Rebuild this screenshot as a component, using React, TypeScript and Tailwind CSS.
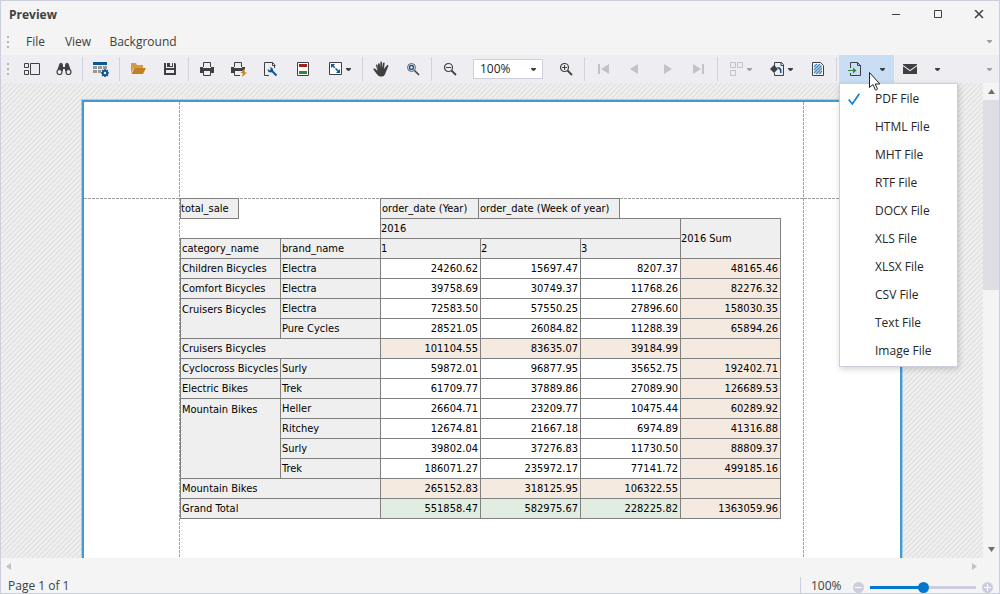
import { useState } from 'react';
import type { ReactNode } from 'react';
import clsx from 'clsx';

const DARK = '#404040';
const BLUE = '#0b5599';
const ORANGE = '#c77f1e';
const MUTED = '#c3c3c6';

type IconProps = { children: ReactNode };

function Icon({ children }: IconProps) {
  return (
    <svg width="16" height="16" viewBox="0 0 16 16" fill="none" aria-hidden className="shrink-0">
      {children}
    </svg>
  );
}

function Caret({ color = DARK }: { color?: string }) {
  return (
    <svg width="5" height="3" viewBox="0 0 5 3" aria-hidden className="shrink-0">
      <path d="M0 0h5v1L3 3H2L0 1z" fill={color} />
    </svg>
  );
}

const ThumbnailsIcon = () => (
  <Icon>
    <path d="M.5 2.500h4v4h-4zM.5 9.500h4v4h-4zM6.500 2.500h9v11h-9z" stroke={DARK} />
  </Icon>
);

const FindIcon = () => (
  <Icon>
    <path d="M3 4 4 2h2l1 2v2h2V4l1-2h2l1 2 2 6H9V8H7v2H1z" fill={DARK} />
    <circle cx="3.500" cy="11" r="2.500" stroke={DARK} strokeWidth="1.200" fill="#efeef3" />
    <circle cx="12.500" cy="11" r="2.500" stroke={DARK} strokeWidth="1.200" fill="#efeef3" />
  </Icon>
);

const ParametersIcon = () => (
  <Icon>
    <path d="M0 1h14v3H0z" fill={BLUE} />
    <path d="M0 5h4v3H0zM5 5h4v3H5zM10 5h4v3h-4zM0 9h4v3H0zM5 9h3v3H5z" fill="#979799" />
    <path d="M12 8v8M8 12h8M9.200 9.200l5.600 5.600M14.800 9.200l-5.600 5.600" stroke={BLUE} strokeWidth="1.700" />
    <circle cx="12" cy="12" r="2.200" fill="#efeef3" stroke={BLUE} strokeWidth="1.800" />
  </Icon>
);

const OpenIcon = () => (
  <Icon>
    <path d="M1 12V2h5l1 2h6v3H4z" fill="#d39b52" />
    <path d="M4.500 7H16l-3 6H1.500z" fill={ORANGE} />
  </Icon>
);

const SaveIcon = () => (
  <Icon>
    <path d="M2 2h2v5h8V2h1l1 1v11H2z" fill={DARK} />
    <path d="M5 2h6v4H5z" fill={DARK} />
    <path d="M8 2h2v3H8zM4 9h8v3H4z" fill="#efeef3" />
  </Icon>
);

const PrintIcon = () => (
  <Icon>
    <path d="M4.500 6V1.500h7V6" stroke={DARK} />
    <path d="M1 6h3v1h8V6h3v6h-3v-2H4v2H1z" fill={DARK} />
    <path d="M4.500 10v4.500h7V10" stroke={DARK} />
  </Icon>
);

const QuickPrintIcon = () => (
  <Icon>
    <path d="M3.500 6V1.500h7V6" stroke={DARK} />
    <path d="M0 6h3v1h8V6h3v2l-3 2H3v2H0z" fill={DARK} />
    <path d="M3.500 10v4.500H9" stroke={DARK} />
    <path d="M14 7.500 9.500 12H12l-1 4 5-4.500h-2.500z" fill={ORANGE} />
  </Icon>
);

const PageSetupIcon = () => (
  <Icon>
    <path d="M6 14.500H1.500v-13h8l2 2V7M9.500 1.500v3h3" stroke={DARK} />
    <path d="m8 9 5.500 5.500" stroke={BLUE} strokeWidth="2" />
    <path d="M5 8 6.500 9.500 8 8 6.500 6.500C9 6 10.500 7.500 10 9.500c-.6 2-2.800 2.500-4.500 1.200C4.700 10 4.600 9 5 8z" fill={BLUE} />
  </Icon>
);

const HeaderFooterIcon = () => (
  <Icon>
    <path d="M2.500 1.500h11v13h-11z" stroke={DARK} fill="#fff" />
    <path d="M4 3h8v3H4z" fill="#a5200f" />
    <path d="M4 10h8v3H4z" fill="#2f8b35" />
  </Icon>
);

const ScaleIcon = () => (
  <Icon>
    <path d="M1.500 1.500h12v12h-12z" stroke={DARK} fill="#fff" />
    <path d="m4 4 7 7" stroke={BLUE} strokeWidth="1.500" strokeDasharray="4 1" />
    <path d="M3 3h4L3 7zM12 8v4H8z" fill={BLUE} />
  </Icon>
);

const HandIcon = () => (
  <Icon>
    <path
      d="M5 9.500V3.200C5 2 6.700 2 6.800 3.200L7.300 7V1.500C7.400.2 9 .2 9 1.500V7l.9-4.800c.2-1.200 1.800-1 1.700.2L11 8l2.800-3.500c.7-.9 2-.2 1.500.8L12.500 12c-.7 2-1.500 3.500-3.500 3.500H7.500c-1.500 0-2.400-.8-3.300-2L.5 8.800c-.5-1 .7-1.800 1.500-1.200L4.500 10 3 4.500c-.3-1.100 1.200-1.600 1.600-.5z"
      fill={DARK}
    />
  </Icon>
);

const MagnifierIcon = () => (
  <Icon>
    <circle cx="6.500" cy="6.500" r="4" stroke="#606060" />
    <circle cx="6.500" cy="6.500" r="2" stroke={BLUE} strokeWidth="1.400" />
    <path d="m9.500 9.500 4.500 4.500" stroke={DARK} strokeWidth="1.600" />
  </Icon>
);

const ZoomGlassIcon = ({ plus = false }: { plus?: boolean }) => (
  <Icon>
    <circle cx="6.500" cy="6.500" r="4" stroke={DARK} strokeWidth="1.200" />
    <path d={plus ? 'M4 6.500h5M6.500 4v5' : 'M4 6.500h5'} stroke={DARK} />
    <path d="m9.500 9.500 4.500 4.500" stroke={DARK} strokeWidth="1.800" />
  </Icon>
);

const FirstIcon = () => (
  <Icon>
    <path d="M3 3h2v10H3zM14 3v10L6 8z" fill={MUTED} />
  </Icon>
);

const PrevIcon = () => (
  <Icon>
    <path d="M11 3v10L3 8z" fill={MUTED} />
  </Icon>
);

const NextIcon = () => (
  <Icon>
    <path d="M5 3v10l8-5z" fill={MUTED} />
  </Icon>
);

const LastIcon = () => (
  <Icon>
    <path d="M2 3v10l8-5zM11 3h2v10h-2z" fill={MUTED} />
  </Icon>
);

const MultiPageIcon = () => (
  <Icon>
    <path d="M1.500 1.500h5v5h-5zM8.500 1.500h5v5h-5zM1.500 9.500h5v5h-5z" stroke={MUTED} />
  </Icon>
);

const PageColorIcon = () => (
  <Icon>
    <path d="M4.500 5V1.500h7l2 2v11h-9V12" stroke={DARK} />
    <path d="M11 1.500v3h3" stroke={DARK} />
    <path d="m0 8 4-4 4 4-4 4z" fill={DARK} />
    <path d="M7 6c2.500-.5 4.500 1 4.500 3.500V12H10V9.500z" fill={BLUE} />
  </Icon>
);

const WatermarkIcon = () => (
  <Icon>
    <path d="M2.500 1.500h8l3 3v10h-11z" stroke={DARK} fill="#fff" />
    <path d="M4 3h6l2 2v8H4z" fill="#d3e2f0" />
    <path d="m4 6 3-3M4 9l6-6M4 12l7.500-7.500M6 13l6-6M9 13l3-3" stroke="#4f88bd" strokeWidth="1.200" />
  </Icon>
);

const ExportIcon = () => (
  <Icon>
    <path d="M3.500 7V1.500h7l3 3v10h-10V12M10.500 1.500v3h3" stroke={DARK} />
    <path d="M1 9h5V6.500L9.500 9.500 6 12.500V10H1z" fill="#2f8b35" />
  </Icon>
);

const MailIcon = () => (
  <Icon>
    <path d="M1 3h14v1L8 9 1 4z" fill={DARK} />
    <path d="m1 5.300 7 5 7-5V13H1z" fill={DARK} />
  </Icon>
);

type ToolProps = { label: string; children: ReactNode; disabled?: boolean };

function Tool({ label, children, disabled }: ToolProps) {
  return (
    <button
      type="button"
      aria-label={label}
      disabled={disabled}
      className="flex h-7 w-8 shrink-0 items-center justify-center"
    >
      {children}
    </button>
  );
}

function DropTool({ label, children, disabled }: ToolProps) {
  return (
    <button
      type="button"
      aria-label={label}
      disabled={disabled}
      className="flex h-7 w-[41px] shrink-0 items-center justify-center gap-0.5"
    >
      {children}
      <Caret color={disabled ? '#a0a0a3' : DARK} />
    </button>
  );
}

const Separator = () => (
  <div className="flex h-6 w-[5px] shrink-0 justify-center">
    <div className="w-px bg-[#d2d2da]" />
  </div>
);

const Grip = () => (
  <div className="flex w-[15px] shrink-0 flex-col items-center gap-[3px] pr-px">
    <span className="h-[2px] w-[2px] bg-[#b4b4b8]" />
    <span className="h-[2px] w-[2px] bg-[#b4b4b8]" />
    <span className="h-[2px] w-[2px] bg-[#b4b4b8]" />
  </div>
);

function TitleBar() {
  return (
    <header className="flex h-[27px] shrink-0 items-center justify-between pl-2">
      <h1 className="font-bold text-[#404040]">Preview</h1>
      <div className="flex">
        <button type="button" aria-label="Minimize" className="flex h-7 w-[42px] items-center justify-center">
          <svg width="10" height="10" viewBox="0 0 10 10" aria-hidden>
            <path d="M1 4h8v1H1z" fill={DARK} />
          </svg>
        </button>
        <button type="button" aria-label="Maximize" className="flex h-7 w-[42px] items-center justify-center">
          <svg width="10" height="10" viewBox="0 0 10 10" fill="none" aria-hidden>
            <path d="M1.500.500h7v7h-7z" stroke={DARK} />
          </svg>
        </button>
        <button type="button" aria-label="Close" className="flex h-7 w-[40px] items-center justify-center">
          <svg width="10" height="10" viewBox="0 0 10 10" fill="none" aria-hidden>
            <path d="m1 0 8 8M9 0 1 8" stroke={DARK} strokeWidth="1.500" />
          </svg>
        </button>
      </div>
    </header>
  );
}

function MenuBar() {
  return (
    <nav className="flex h-[27px] shrink-0 items-center text-[#404040]">
      <Grip />
      <button type="button" className="w-[39px] text-center">File</button>
      <button type="button" className="w-[46px] text-center">View</button>
      <button type="button" className="w-[84px] text-center">Background</button>
      <div className="ml-auto pr-[7px]">
        <Caret color="#a0a0a3" />
      </div>
    </nav>
  );
}

const exportFormats = [
  'PDF File',
  'HTML File',
  'MHT File',
  'RTF File',
  'DOCX File',
  'XLS File',
  'XLSX File',
  'CSV File',
  'Text File',
  'Image File',
];

function ExportMenu() {
  const [selected, setSelected] = useState('PDF File');

  return (
    <div
      role="menu"
      className="absolute top-full left-0 z-20 flex w-[119px] flex-col border border-[#cccede] bg-white pt-px pb-px shadow-[1px_2px_6px_rgba(0,0,0,0.18)]"
    >
      {exportFormats.map((format) => (
        <button
          key={format}
          type="button"
          role="menuitemradio"
          aria-checked={format === selected}
          onClick={() => setSelected(format)}
          className="flex h-7 items-center text-left text-[#262626]"
        >
          <span className="flex w-[35px] pl-2">
            {format === selected && (
              <svg width="12" height="12" viewBox="0 0 12 12" fill="none" aria-hidden>
                <path d="M.7 6.500 4.300 11 11.300.7" stroke="#0c7ccf" strokeWidth="1.600" />
              </svg>
            )}
          </span>
          {format}
        </button>
      ))}
    </div>
  );
}

function Toolbar() {
  return (
    <div className="flex h-7 shrink-0 items-center bg-[#eeedf2]">
      <Grip />
      <Tool label="Thumbnails"><ThumbnailsIcon /></Tool>
      <Tool label="Search"><FindIcon /></Tool>
      <Separator />
      <Tool label="Parameters"><ParametersIcon /></Tool>
      <Separator />
      <Tool label="Open"><OpenIcon /></Tool>
      <Tool label="Save"><SaveIcon /></Tool>
      <Separator />
      <Tool label="Print"><PrintIcon /></Tool>
      <Tool label="Quick print"><QuickPrintIcon /></Tool>
      <Tool label="Page setup"><PageSetupIcon /></Tool>
      <Tool label="Header and footer"><HeaderFooterIcon /></Tool>
      <DropTool label="Scale"><ScaleIcon /></DropTool>
      <Separator />
      <Tool label="Hand tool"><HandIcon /></Tool>
      <Tool label="Magnifier"><MagnifierIcon /></Tool>
      <Separator />
      <Tool label="Zoom out"><ZoomGlassIcon /></Tool>
      <div className="relative mx-[7px] flex h-5 w-[70px] shrink-0 items-center">
        <select
          aria-label="Zoom"
          defaultValue="100%"
          className="h-5 w-full appearance-none border border-[#cccede] bg-white pl-[6px] text-[#262626]"
        >
          <option>50%</option>
          <option>100%</option>
          <option>200%</option>
        </select>
        <span className="pointer-events-none absolute right-[7px] flex">
          <Caret />
        </span>
      </div>
      <Tool label="Zoom in"><ZoomGlassIcon plus /></Tool>
      <Separator />
      <Tool label="First page" disabled><FirstIcon /></Tool>
      <Tool label="Previous page" disabled><PrevIcon /></Tool>
      <Tool label="Next page" disabled><NextIcon /></Tool>
      <Tool label="Last page" disabled><LastIcon /></Tool>
      <Separator />
      <DropTool label="Multiple pages" disabled><MultiPageIcon /></DropTool>
      <DropTool label="Page color"><PageColorIcon /></DropTool>
      <Tool label="Watermark"><WatermarkIcon /></Tool>
      <Separator />
      <div className="relative flex h-7 shrink-0 bg-[#c9def5]">
        <Tool label="Export"><ExportIcon /></Tool>
        <button type="button" aria-label="Export formats" className="flex w-[23px] items-center justify-center">
          <Caret />
        </button>
        <ExportMenu />
        <svg
          width="13"
          height="20"
          viewBox="0 0 13 20"
          aria-hidden
          className="pointer-events-none absolute top-[17px] left-[30px] z-30"
        >
          <path
            d="M.5.500v15l3.500-3 2.300 5.300c.3.700 2.400-.2 2.100-.9L6.200 12h4.600z"
            fill="#fff"
            stroke="#222"
          />
        </svg>
      </div>
      <Tool label="Send by e-mail"><MailIcon /></Tool>
      <button type="button" aria-label="E-mail formats" className="flex h-7 w-[23px] shrink-0 items-center justify-center">
        <Caret />
      </button>
      <div className="ml-auto pr-[7px]">
        <Caret color="#a0a0a3" />
      </div>
    </div>
  );
}

type Row = {
  category?: string;
  span?: number;
  brand?: string;
  values: string[];
  kind?: 'total' | 'grand';
};

const rows: Row[] = [
  { category: 'Children Bicycles', brand: 'Electra', values: ['24260.62', '15697.47', '8207.37', '48165.46'] },
  { category: 'Comfort Bicycles', brand: 'Electra', values: ['39758.69', '30749.37', '11768.26', '82276.32'] },
  { category: 'Cruisers Bicycles', span: 2, brand: 'Electra', values: ['72583.50', '57550.25', '27896.60', '158030.35'] },
  { brand: 'Pure Cycles', values: ['28521.05', '26084.82', '11288.39', '65894.26'] },
  { category: 'Cruisers Bicycles', values: ['101104.55', '83635.07', '39184.99', ''], kind: 'total' },
  { category: 'Cyclocross Bicycles', brand: 'Surly', values: ['59872.01', '96877.95', '35652.75', '192402.71'] },
  { category: 'Electric Bikes', brand: 'Trek', values: ['61709.77', '37889.86', '27089.90', '126689.53'] },
  { category: 'Mountain Bikes', span: 4, brand: 'Heller', values: ['26604.71', '23209.77', '10475.44', '60289.92'] },
  { brand: 'Ritchey', values: ['12674.81', '21667.18', '6974.89', '41316.88'] },
  { brand: 'Surly', values: ['39802.04', '37276.83', '11730.50', '88809.37'] },
  { brand: 'Trek', values: ['186071.27', '235972.17', '77141.72', '499185.16'] },
  { category: 'Mountain Bikes', values: ['265152.83', '318125.95', '106322.55', ''], kind: 'total' },
  { category: 'Grand Total', values: ['551858.47', '582975.67', '228225.82', '1363059.96'], kind: 'grand' },
];

function valueColor(row: Row, index: number) {
  if (index === 3 || row.kind === 'total') return 'bg-[#f5eadf]';
  if (row.kind === 'grand') return 'bg-[#e2ede1]';
  return 'bg-white';
}

const head = 'border border-[#808080] bg-[#efefef] p-0 text-left font-normal';

function PivotGrid() {
  return (
    <div className="w-[601px] font-['DejaVu_Sans_Condensed','DejaVu_Sans',sans-serif] text-[11px] leading-[14px] text-black">
      <div className="-mb-px flex h-[21px]">
        <div className="flex w-[59px] items-center border border-[#808080] bg-[#efefef]">total_sale</div>
        <div className="ml-[141px] flex w-[99px] items-center border border-[#808080] bg-[#efefef] pl-px">
          order_date (Year)
        </div>
        <div className="-ml-px flex w-[142px] items-center border border-[#808080] bg-[#efefef] pl-px">
          order_date (Week of year)
        </div>
      </div>
      <table className="w-full table-fixed border-collapse">
        <thead>
          <tr className="h-5">
            <td colSpan={2} className="p-0" />
            <th colSpan={3} className={head}>2016</th>
            <th rowSpan={2} className={head}>2016 Sum</th>
          </tr>
          <tr className="h-5">
            <th className={clsx(head, 'pl-px')}>category_name</th>
            <th className={clsx(head, 'pl-px')}>brand_name</th>
            <th className={head}>1</th>
            <th className={head}>2</th>
            <th className={head}>3</th>
          </tr>
        </thead>
        <tbody>
          {rows.map((row, i) => (
            <tr key={i} className="h-5">
              {row.category && (
                <th
                  rowSpan={row.span}
                  colSpan={row.brand ? 1 : 2}
                  className={clsx(head, 'pl-px whitespace-nowrap', row.span && 'pt-1 align-top')}
                >
                  {row.category}
                </th>
              )}
              {row.brand && <th className={clsx(head, 'pl-px')}>{row.brand}</th>}
              {row.values.map((value, j) => (
                <td
                  key={j}
                  className={clsx('border border-[#808080] p-0 pr-0.5 text-right', valueColor(row, j))}
                >
                  {value}
                </td>
              ))}
            </tr>
          ))}
        </tbody>
      </table>
    </div>
  );
}

const dashV =
  'absolute inset-y-0 w-px bg-[repeating-linear-gradient(to_bottom,#a0a0a0_0_3px,transparent_3px_4px)]';

function Paper() {
  return (
    <article className="relative h-[1060px] w-[822px] shrink-0 border border-[#a3cfea] bg-white">
      <div className="relative h-full border-2 border-[#4499d3] pt-24 pl-24">
        <div className={clsx(dashV, 'left-[95px]')} />
        <div className={clsx(dashV, 'right-24')} />
        <div className="absolute inset-x-0 top-24 h-px bg-[repeating-linear-gradient(to_right,#a0a0a0_0_3px,transparent_3px_4px)]" />
        <div className="relative">
          <PivotGrid />
        </div>
      </div>
    </article>
  );
}

function VerticalScrollBar() {
  return (
    <div className="flex w-4 shrink-0 flex-col bg-[#f4f4f4]">
      <button type="button" aria-label="Scroll up" className="flex h-[17px] items-center justify-center">
        <svg width="7" height="5" viewBox="0 0 7 5" aria-hidden>
          <path d="M3.500 0 7 5H0z" fill="#707070" />
        </svg>
      </button>
      <div className="flex-1">
        <div className="h-[43%] bg-[#dedde3]" />
      </div>
      <button type="button" aria-label="Scroll down" className="flex h-[17px] items-center justify-center">
        <svg width="7" height="5" viewBox="0 0 7 5" aria-hidden>
          <path d="M0 0h7L3.500 5z" fill="#707070" />
        </svg>
      </button>
    </div>
  );
}

function HorizontalScrollBar() {
  return (
    <div className="flex h-[17px] shrink-0 items-center justify-between pr-[22px] pl-[5px]">
      <button type="button" aria-label="Scroll left" disabled>
        <svg width="5" height="7" viewBox="0 0 5 7" aria-hidden>
          <path d="M5 0v7L0 3.500z" fill="#c2c2c5" />
        </svg>
      </button>
      <button type="button" aria-label="Scroll right" disabled>
        <svg width="5" height="7" viewBox="0 0 5 7" aria-hidden>
          <path d="M0 0v7l5-3.500z" fill="#c2c2c5" />
        </svg>
      </button>
    </div>
  );
}

function StatusBar() {
  return (
    <footer className="flex h-[18px] shrink-0 items-end leading-[14px] text-[#404040]">
      <span className="flex-1 pl-[7px]">Page 1 of 1</span>
      <div className="flex h-4 items-end border-l border-[#cccede] pr-[6px] pl-[10px]">
        <label htmlFor="zoom-track" className="w-[42px]">100%</label>
        <div className="flex h-3 items-center gap-1.5">
          <button type="button" aria-label="Decrease zoom">
            <svg width="11" height="11" viewBox="0 0 11 11" aria-hidden>
              <circle cx="5.500" cy="5.500" r="5.500" fill="#cccddd" />
              <path d="M2 5h7v1H2z" fill="#fff" />
            </svg>
          </button>
          <input
            id="zoom-track"
            type="range"
            defaultValue={50}
            className="h-[11px] w-[106px] appearance-none bg-[linear-gradient(to_right,#0078d0_50%,#cccddd_50%)] bg-[length:100%_3px] bg-center bg-no-repeat [&::-webkit-slider-thumb]:h-[11px] [&::-webkit-slider-thumb]:w-[11px] [&::-webkit-slider-thumb]:appearance-none [&::-webkit-slider-thumb]:rounded-full [&::-webkit-slider-thumb]:bg-[#0078d0]"
          />
          <button type="button" aria-label="Increase zoom">
            <svg width="11" height="11" viewBox="0 0 11 11" aria-hidden>
              <circle cx="5.500" cy="5.500" r="5.500" fill="#cccddd" />
              <path d="M2 5h7v1H2zM5 2h1v7H5z" fill="#fff" />
            </svg>
          </button>
        </div>
      </div>
    </footer>
  );
}

export default function App() {
  return (
    <div className="flex h-screen flex-col border border-[#cccede] bg-[#f4f4f4] font-['Open_Sans','Noto_Sans',sans-serif] text-[12px]">
      <TitleBar />
      <MenuBar />
      <Toolbar />
      <div className="flex min-h-0 flex-1">
        <main className="flex min-w-0 flex-1 justify-center overflow-hidden bg-[#efefef] bg-[linear-gradient(135deg,#e5e5e5_25%,#f1f1f1_25%,#f1f1f1_50%,#e5e5e5_50%,#e5e5e5_75%,#f1f1f1_75%)] bg-[length:5px_5px] pt-4">
          <Paper />
        </main>
        <VerticalScrollBar />
      </div>
      <HorizontalScrollBar />
      <StatusBar />
    </div>
  );
}
